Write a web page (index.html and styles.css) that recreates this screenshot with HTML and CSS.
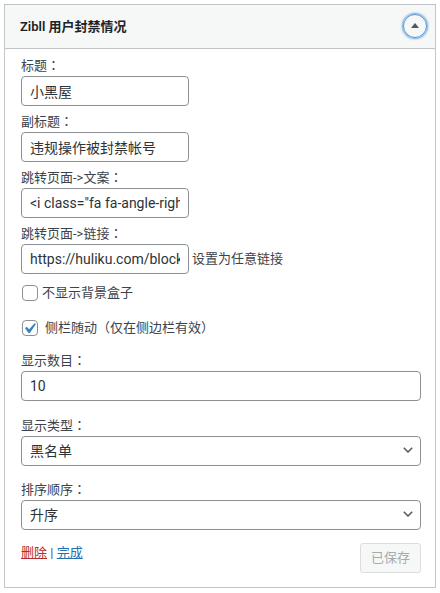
FILE: index.html
```html
<!DOCTYPE html>
<html lang="zh-CN">
<head>
<meta charset="utf-8">
<title>Zibll 用户封禁情况</title>
<link rel="stylesheet" href="styles.css">
</head>
<body>
<div class="widget">
  <div class="widget-top">
    <h3 class="widget-title">Zibll 用户封禁情况</h3>
    <span class="toggle"><span class="tri"></span></span>
  </div>
  <div class="widget-inside">
    <div class="field">
      <label>标题<span class="p" lang="zh-TW">：</span></label>
      <input class="text short" type="text" value="小黑屋">
    </div>
    <div class="field">
      <label>副标题<span class="p" lang="zh-TW">：</span></label>
      <input class="text short" type="text" value="违规操作被封禁帐号">
    </div>
    <div class="field">
      <label>跳转页面-&gt;文案<span class="p" lang="zh-TW">：</span></label>
      <input class="text short" type="text" value="&lt;i class=&quot;fa fa-angle-right&quot;&gt;&lt;/i&gt;">
    </div>
    <div class="field field-link">
      <label>跳转页面-&gt;链接<span class="p" lang="zh-TW">：</span></label>
      <div class="inline">
        <input class="text short" type="text" value="https://huliku.com/blocklist">
        <span class="hint">设置为任意链接</span>
      </div>
    </div>
    <div class="check-row">
      <span class="cb"></span>
      <span class="check-text">不显示背景盒子</span>
    </div>
    <div class="check-row check-row-last">
      <span class="cb checked">
        <svg class="mark" viewBox="0 0 20 20" width="21" height="21"><path d="M14.83 4.89l1.34.94-5.81 8.38H9.02L5.78 9.67l1.34-1.25 2.57 2.4z" fill="#3582c4"/></svg>
      </span>
      <span class="check-text wide">侧栏随动<span class="p" lang="zh-TW">（</span>仅在侧边栏有效<span class="p" lang="zh-TW">）</span></span>
    </div>
    <div class="field field-wide f5">
      <label>显示数目<span class="p" lang="zh-TW">：</span></label>
      <input class="text full" type="text" value="10">
    </div>
    <div class="field field-wide f6">
      <label>显示类型<span class="p" lang="zh-TW">：</span></label>
      <div class="select-wrap">
        <select class="select"><option>黑名单</option></select>
        <svg class="chev" viewBox="0 0 10 6" width="10" height="6"><polyline points="0.8,0.8 5,5 9.2,0.8" fill="none" stroke="#50575e" stroke-width="1.5"/></svg>
      </div>
    </div>
    <div class="field field-wide f7">
      <label>排序顺序<span class="p" lang="zh-TW">：</span></label>
      <div class="select-wrap">
        <select class="select"><option>升序</option></select>
        <svg class="chev" viewBox="0 0 10 6" width="10" height="6"><polyline points="0.8,0.8 5,5 9.2,0.8" fill="none" stroke="#50575e" stroke-width="1.5"/></svg>
      </div>
    </div>
    <div class="footer">
      <div class="actions"><a class="remove" href="#">删除</a> <span class="sep">|</span> <a class="done" href="#">完成</a></div>
      <button class="saved" type="button" disabled>已保存</button>
    </div>
  </div>
</div>
</body>
</html>
```
FILE: styles.css
```css
body {
  margin: 0;
  background: #fff;
  font-family: Roboto, "Noto Sans CJK SC", sans-serif;
  font-size: 13px;
  line-height: 1.4;
  color: #3c434a;
}

.p {
  font-family: "Noto Sans CJK TC", "Noto Sans CJK SC", sans-serif;
  line-height: 0;
}

.widget {
  margin: 4px;
  width: 432px;
  box-sizing: border-box;
  border: 1px solid #c3c4c7;
  background: #fff;
}

.widget-top {
  display: flex;
  align-items: center;
  justify-content: space-between;
  background: #f6f7f7;
  border-bottom: 1px solid #c3c4c7;
}

.widget-title {
  margin: 0;
  padding: 15px;
  font-size: 13px;
  line-height: 13px;
  font-weight: 600;
  color: #1d2327;
}

.toggle {
  width: 24px;
  height: 24px;
  box-sizing: border-box;
  border-radius: 50%;
  border: 1px solid #4f94d4;
  box-shadow: 0 0 2px 1px rgba(79, 148, 212, 0.8);
  margin-right: 8px;
  margin-bottom: 2px;
  display: flex;
  align-items: center;
  justify-content: center;
}

.tri {
  width: 0;
  height: 0;
  border-left: 4px solid transparent;
  border-right: 4px solid transparent;
  border-bottom: 5px solid #50575e;
  margin-top: -1px;
}

.widget-inside {
  padding: 8px 14px 14px 16px;
}

.field {
  margin-bottom: 7px;
}

.field label {
  display: block;
  line-height: 18px;
  height: 18px;
  margin-bottom: 1px;
}

.text, .select {
  box-sizing: border-box;
  height: 30px;
  padding: 0 8px;
  border: 1px solid #8c8f94;
  border-radius: 4px;
  background: #fff;
  color: #2c3338;
  font-family: Roboto, "Noto Sans CJK SC", sans-serif;
  font-size: 14px;
  line-height: 28px;
  margin: 0;
  outline: none;
}

.short {
  width: 168px;
}

.full {
  width: 400px;
}

.inline {
  display: flex;
  align-items: center;
  gap: 3px;
}

.hint {
  line-height: 18px;
}

.field-link {
  margin-bottom: 9px;
}

.check-row {
  display: flex;
  align-items: center;
  height: 20px;
  margin-bottom: 15px;
}

.check-row-last {
  margin-bottom: 14px;
}

.cb {
  position: relative;
  width: 16px;
  height: 16px;
  box-sizing: border-box;
  border: 1px solid #8c8f94;
  border-radius: 4px;
  background: #fff;
  margin-left: 1px;
  flex: none;
}

.mark {
  position: absolute;
  left: -4px;
  top: -3px;
}

.check-text {
  margin-left: 4px;
  line-height: 18px;
  height: 18px;
}

.check-text.wide {
  margin-left: 7px;
}

.f5 {
  margin-bottom: 16px;
}

.f6 {
  margin-bottom: 15px;
}

.f7 {
  margin-bottom: 13px;
}

.select-wrap {
  position: relative;
  width: 400px;
}

.select {
  width: 400px;
  -webkit-appearance: none;
  appearance: none;
  padding-right: 24px;
  display: block;
}

.chev {
  position: absolute;
  right: 8px;
  top: 11px;
  pointer-events: none;
}

.footer {
  display: flex;
  justify-content: space-between;
  align-items: flex-start;
}

.actions {
  line-height: 19px;
}

.remove {
  color: #b32d2e;
}

.done {
  color: #2271b1;
}

.sep {
  color: #50575e;
}

.saved {
  box-sizing: border-box;
  height: 30px;
  padding: 0 10px;
  border: 1px solid #dcdcde;
  border-radius: 3px;
  background: #f6f7f7;
  color: #a7aaad;
  font-family: Roboto, "Noto Sans CJK SC", sans-serif;
  font-size: 13px;
  line-height: 28px;
  margin: 0;
}
```
